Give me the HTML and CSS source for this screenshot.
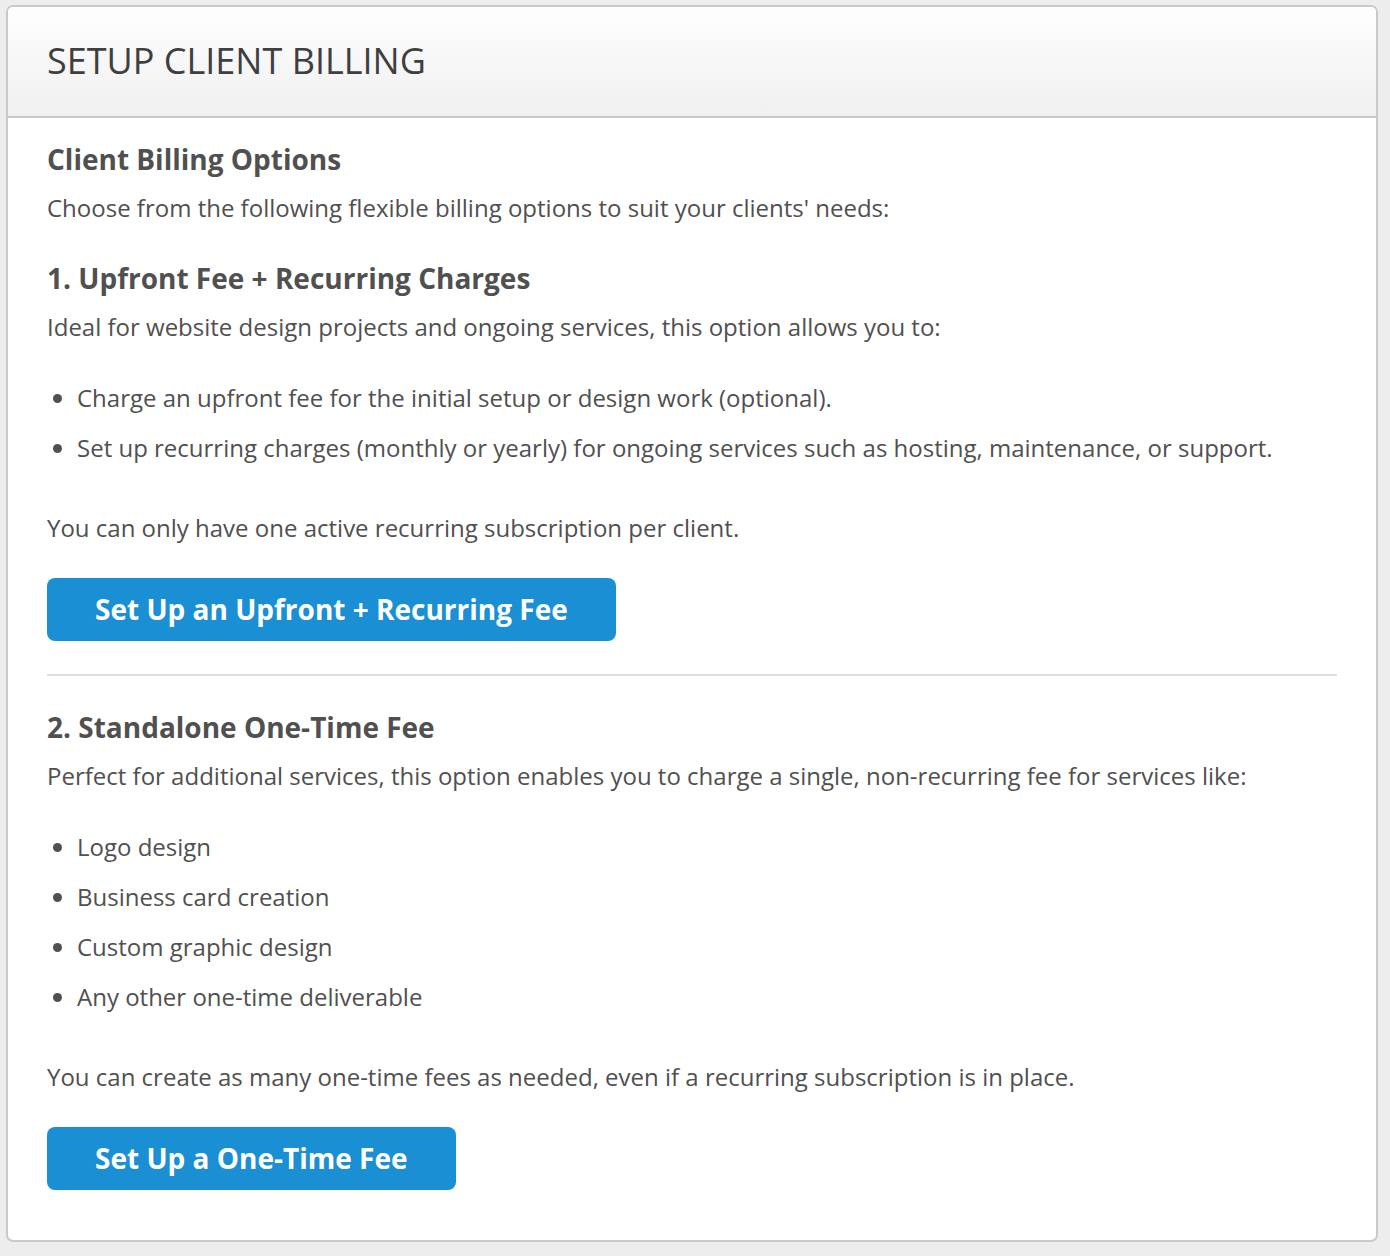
FILE: index.html
```html
<!DOCTYPE html>
<html lang="en">

<head>
    <meta charset="UTF-8">
    <meta name="viewport" content="width=device-width, initial-scale=1.0">
    <title>Setup Client Billing</title>
    <link rel="stylesheet" href="styles.css">
</head>

<body>
    <div class="panel">
        <div class="panel-head">
            <h1>SETUP CLIENT BILLING</h1>
        </div>
        <div class="panel-body">
            <h3 class="first">Client Billing Options</h3>
            <p>Choose from the following flexible billing options to suit your clients' needs:</p>

            <h3>1. Upfront Fee + Recurring Charges</h3>
            <p>Ideal for website design projects and ongoing services, this option allows you to:</p>
            <ul>
                <li>Charge an upfront fee for the initial setup or design work (optional).</li>
                <li>Set up recurring charges (monthly or yearly) for ongoing services such as hosting, maintenance, or support.</li>
            </ul>
            <p>You can only have one active recurring subscription per client.</p>
            <a class="btn" href="#">Set Up an Upfront + Recurring Fee</a>

            <hr>

            <h3 class="first">2. Standalone One-Time Fee</h3>
            <p>Perfect for additional services, this option enables you to charge a single, non-recurring fee for services like:</p>
            <ul>
                <li>Logo design</li>
                <li>Business card creation</li>
                <li>Custom graphic design</li>
                <li>Any other one-time deliverable</li>
            </ul>
            <p>You can create as many one-time fees as needed, even if a recurring subscription is in place.</p>
            <a class="btn" href="#">Set Up a One-Time Fee</a>
        </div>
    </div>
</body>

</html>
```

FILE: styles.css
```css
* {
    margin: 0;
    padding: 0;
    box-sizing: border-box;
}

body {
    background-color: #ededed;
    font-family: "Open Sans", "Liberation Sans", sans-serif;
    color: #505050;
    padding: 5px 12px 14px 6px;
}

.panel {
    background-color: #fff;
    border: 2px solid #c9c9c9;
    border-radius: 7px;
    overflow: hidden;
}

.panel-head {
    height: 111px;
    background: linear-gradient(#fefefe, #f0f0f0);
    border-bottom: 2px solid #c9c9c9;
    padding: 0 39px;
    display: flex;
    align-items: center;
}

.panel-head h1 {
    font-size: 36px;
    font-weight: 400;
    color: #3f3f3f;
    margin-top: -2px;
}

.panel-body {
    padding: 24px 39px 50px;
}

h3 {
    font-size: 28px;
    font-weight: 700;
    line-height: 34px;
    color: #505050;
    margin: 38px 0 17px;
}

h3.first {
    margin-top: 0;
}

p {
    font-size: 24px;
    line-height: 30px;
}

ul {
    margin: 41px 0 50px;
    padding-left: 30px;
}

li {
    font-size: 24px;
    line-height: 30px;
}

li + li {
    margin-top: 20px;
}

.btn {
    display: inline-block;
    margin-top: 35px;
    height: 63px;
    line-height: 63px;
    padding: 0 48px;
    background-color: #1b8fd3;
    color: #fff;
    font-size: 28px;
    font-weight: 700;
    text-decoration: none;
    border-radius: 8px;
}

hr {
    border: 0;
    border-top: 2px solid #ddd;
    margin: 33px 0 34px;
}
```
